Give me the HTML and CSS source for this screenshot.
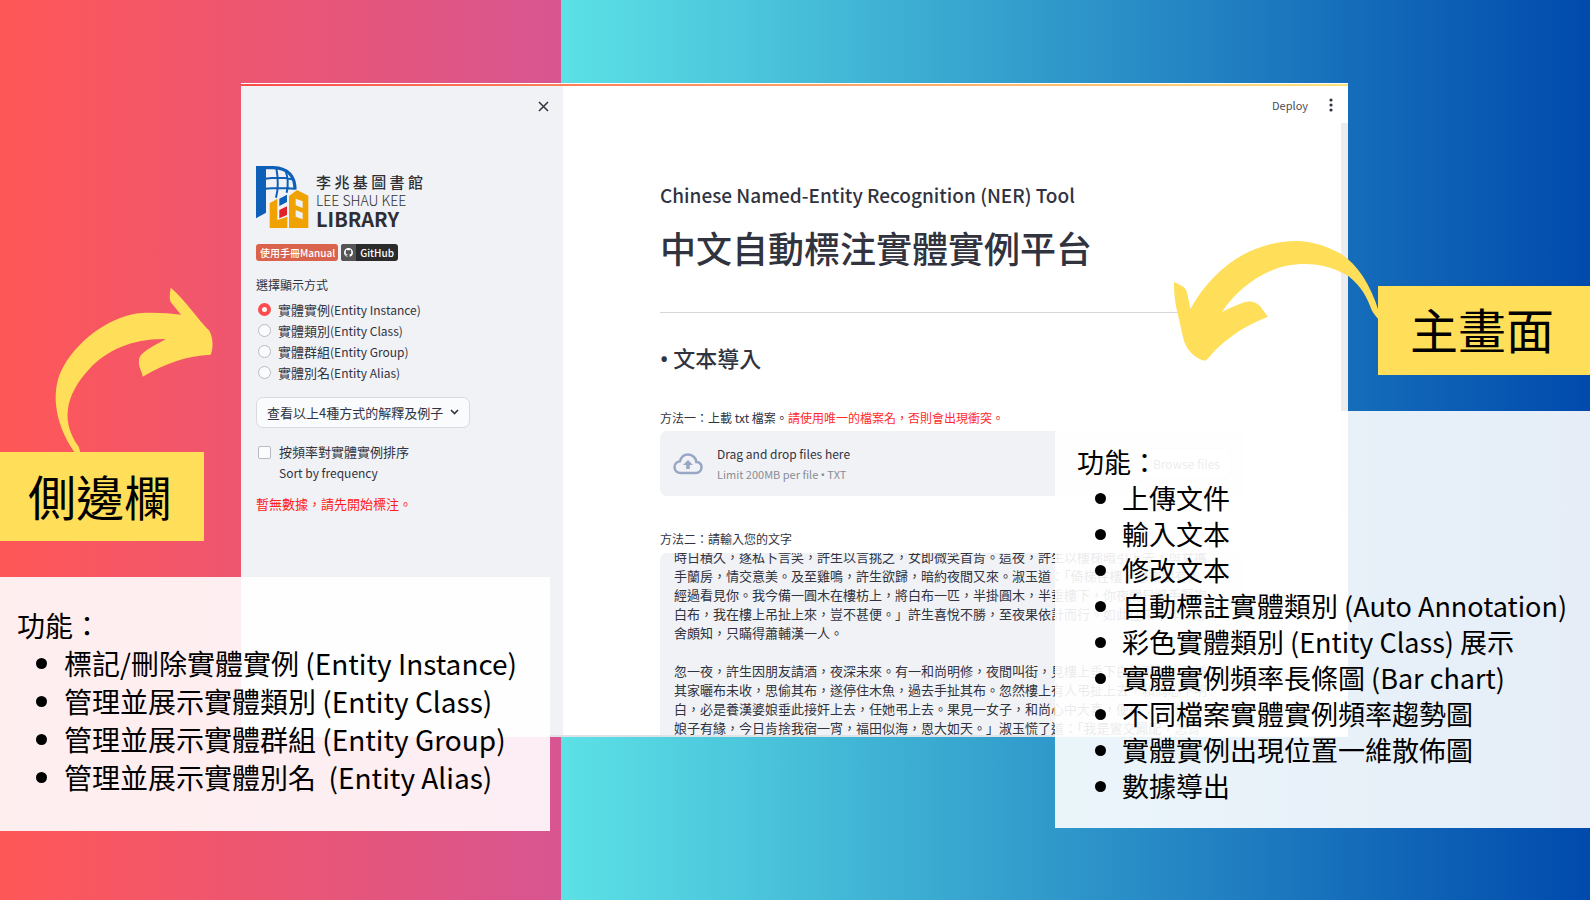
FILE: index.html
```html
<!DOCTYPE html>
<html lang="zh-Hant">
<head>
<meta charset="utf-8">
<title>中文自動標注實體實例平台</title>
<link rel="stylesheet" href="styles.css">
</head>
<body>
<div class="stage">
  <section class="app">
    <div class="rainbow"></div>
    <aside class="sidebar">
      <button class="icon-btn close" type="button" aria-label="Close">
        <svg width="11" height="11" viewBox="0 0 11 11"><path d="M1 1L10 10M10 1L1 10" stroke="#31333f" stroke-width="1.500"/></svg>
      </button>
      <div class="logo">
        <svg width="53" height="62" viewBox="0 0 159 186">
          <path fill="#0d5fb8" d="M0 0H30V140L0 157Z"/>
          <path fill="none" stroke="#0d5fb8" stroke-width="10" d="M20 5H52C98 6 117 34 117 70"/>
          <path fill="none" stroke="#0d5fb8" stroke-width="6" d="M61 6C67 40 67 70 60 95M88 12C98 40 97 60 92 80M28 38C60 34 90 36 108 40M28 68C60 64 90 66 119 68"/>
          <path fill="#f0a202" d="M41 112L64 98V162L94 152V186H41Z"/>
          <path fill="#0d5fb8" d="M70 98L93 86V108L70 120Z"/>
          <path fill="#e02128" d="M70 132L93 121V147L70 157Z"/>
          <path fill="#f0a202" fill-rule="evenodd" d="M99 90L123 72L157 89V186H99ZM119 98V118L140 126V106ZM119 132V152L140 160V140Z"/>
        </svg>
        <div class="logo-text">
          <span class="logo-zh">李 兆 基 圖 書 館</span>
          <span class="logo-name">LEE SHAU KEE</span>
          <span class="logo-lib">LIBRARY</span>
        </div>
      </div>
      <div class="badges">
        <a class="badge manual" href="#">使用手冊Manual</a>
        <a class="badge github" href="#"><span class="mark"><svg width="9" height="9" viewBox="0 0 16 16"><path fill="#fff" d="M8 0C3.58 0 0 3.58 0 8c0 3.54 2.29 6.53 5.47 7.59.4.07.55-.17.55-.38 0-.19-.01-.82-.01-1.49-2.01.37-2.53-.49-2.69-.94-.09-.23-.48-.94-.82-1.13-.28-.15-.68-.52-.01-.53.63-.01 1.08.58 1.23.82.72 1.21 1.87.87 2.33.66.07-.52.28-.87.51-1.07-1.78-.2-3.64-.89-3.64-3.95 0-.87.31-1.59.82-2.15-.08-.2-.36-1.02.08-2.12 0 0 .67-.21 2.2.82a7.6 7.6 0 0 1 4 0c1.53-1.04 2.2-.82 2.2-.82.44 1.1.16 1.92.08 2.12.51.56.82 1.27.82 2.15 0 3.07-1.87 3.75-3.65 3.95.29.25.54.73.54 1.48 0 1.07-.01 1.93-.01 2.2 0 .21.15.46.55.38A8 8 0 0 0 16 8c0-4.42-3.58-8-8-8z"/></svg></span><span class="word">GitHub</span></a>
      </div>
      <fieldset class="modes">
        <legend>選擇顯示方式</legend>
        <label><input type="radio" name="mode" checked><span>實體實例<span class="en">(Entity Instance)</span></span></label>
        <label><input type="radio" name="mode"><span>實體類別<span class="en">(Entity Class)</span></span></label>
        <label><input type="radio" name="mode"><span>實體群組<span class="en">(Entity Group)</span></span></label>
        <label><input type="radio" name="mode"><span>實體別名<span class="en">(Entity Alias)</span></span></label>
      </fieldset>
      <button class="popover" type="button">查看以上4種方式的解釋及例子
        <svg width="9" height="6" viewBox="0 0 9 6"><path d="M1 1L4.500 4.500L8 1" fill="none" stroke="#31333f" stroke-width="1.600"/></svg>
      </button>
      <label class="sort"><input type="checkbox"><span>按頻率對實體實例排序<br><span class="en">Sort by frequency</span></span></label>
      <p class="warn">暫無數據，請先開始標注。</p>
    </aside>
    <main class="main">
      <header class="toolbar">
        <button class="deploy" type="button">Deploy</button>
        <button class="icon-btn" type="button" aria-label="Menu">
          <svg width="4" height="14" viewBox="0 0 4 14" fill="#31333f"><circle cx="2" cy="2" r="1.600"/><circle cx="2" cy="7" r="1.600"/><circle cx="2" cy="12" r="1.600"/></svg>
        </button>
      </header>
      <div class="scroll">
        <div class="content">
          <h2>Chinese Named-Entity Recognition (NER) Tool</h2>
          <h1>中文自動標注實體實例平台</h1>
          <hr>
          <h3><span class="dot">•</span> 文本導入</h3>
          <p class="field-label">方法一：上載 txt 檔案。<span>請使用唯一的檔案名，否則會出現衝突。</span></p>
          <div class="uploader">
            <svg width="30" height="22" viewBox="0 0 30 22"><path d="M8 20C4 20 1.500 17.500 1.500 14C1.500 11 4 8.500 7 8.200C8 4.500 11 1.500 15 1.500C19.500 1.500 23 5 23.300 9C26.500 9.200 28.500 11.500 28.500 14.500C28.500 17.500 26 20 23 20Z" fill="none" stroke="#97a6c3" stroke-width="2.400"/><path d="M15 7L20 12H16.800V16H13.200V12H10Z" fill="#97a6c3"/></svg>
            <div class="drop"><span>Drag and drop files here</span><small>Limit 200MB per file <span class="dot">•</span> TXT</small></div>
            <button class="browse" type="button">Browse files</button>
          </div>
          <label class="field-label" for="source">方法二：請輸入您的文字</label>
          <textarea id="source" wrap="off">時日積久，逐私卜言笑，許生以言挑之，女即微笑首肯。這夜，許生以樓梯暗引上去，與女攜
手蘭房，情交意美。及至雞鳴，許生欲歸，暗約夜間又來。淑玉道：「倚梯在樓，恐夜間有人
經過看見你。我今備一圓木在樓枋上，將白布一匹，半掛圓木，半垂樓下，你夜間只將手緊抱
白布，我在樓上吊扯上來，豈不甚便。」許生喜悅不勝，至夜果依計而行。如此往來半年，鄰
舍頗知，只瞞得蕭輔漢一人。

忽一夜，許生因朋友請酒，夜深未來。有一和尚明修，夜間叫街，見樓上垂下白布到地，只道
其家曬布未收，思偷其布，遂停住木魚，過去手扯其布。忽然樓上有人弔扯上去，和尚心下明
白，必是養漢婆娘垂此接奸上去，任她弔上去。果見一女子，和尚心中大喜，便道：「小僧與
娘子有緣，今日肯捨我宿一宵，福田似海，恩大如天。」淑玉慌了道：「我是鸞交鳳配，怎肯
失身於你？」</textarea>
        </div>
        <div class="scrollbar"></div>
      </div>
    </main>
  </section>

  <svg class="arrow arrow-left" width="240" height="280" viewBox="0 0 720 840"><path fill="#ffde59" d="M226 550C155 450 155 350 190 290C245 195 345 135 425 129C470 127 510 130 543 134L515 100C507 90 509 75 512 53C555 88 595 150 628 182C640 205 640 235 632 254C560 258 500 278 428 320C426 300 415 298 417 270C420 245 460 230 497 207C400 205 320 240 270 295C190 380 185 460 236 530L242 550Z"/></svg>
  <h2 class="tag tag-left">側邊欄</h2>
  <section class="note note-left">
    <p>功能：</p>
    <ul>
      <li>標記/刪除實體實例 (Entity Instance)</li>
      <li>管理並展示實體類別 (Entity Class)</li>
      <li>管理並展示實體群組 (Entity Group)</li>
      <li>管理並展示實體別名&nbsp; (Entity Alias)</li>
    </ul>
  </section>

  <svg class="arrow arrow-right" width="240" height="160" viewBox="0 0 720 480"><path fill="#ffde59" d="M717 276C690 190 650 130 600 100C545 70 500 63 465 63C340 65 225 135 151 267C146 240 143 220 137 208C130 197 115 193 102 186C101 235 110 270 118 300C124 330 128 350 134 368C145 395 170 418 196 422C205 418 215 400 235 382C280 340 330 310 384 290C375 280 370 270 360 258C345 243 325 240 305 250C285 257 262 268 246 276C290 210 360 155 440 137C510 125 570 135 625 168C665 200 680 230 695 270C700 280 707 288 717 300Z"/></svg>
  <h2 class="tag tag-right">主畫面</h2>
  <section class="note note-right">
    <p>功能：</p>
    <ul>
      <li>上傳文件</li>
      <li>輸入文本</li>
      <li>修改文本</li>
      <li>自動標註實體類別 (Auto Annotation)</li>
      <li>彩色實體類別 (Entity Class) 展示</li>
      <li>實體實例頻率長條圖 (Bar chart)</li>
      <li>不同檔案實體實例頻率趨勢圖</li>
      <li>實體實例出現位置一維散佈圖</li>
      <li>數據導出</li>
    </ul>
  </section>
</div>
<script src="app.js"></script>
</body>
</html>
```
FILE: styles.css
```css
* { box-sizing: border-box; }

body, h1, h2, h3, p, ul, hr, fieldset, legend { margin: 0; padding: 0; }

body, button, textarea { font-family: "Noto Sans CJK TC", "Noto Sans", sans-serif; }

button { cursor: pointer; }

.stage {
  position: relative;
  min-height: 100vh;
  padding: 83px 242px 163px 241px;
  overflow: hidden;
  display: flex;
  background:
    linear-gradient(90deg, #ff5757, #d75591) 0 0 / 561px 100% no-repeat,
    linear-gradient(90deg, #5ce1e6 561px, #004aad);
}

/* application window */
.app {
  position: relative;
  flex: 1;
  display: flex;
  height: 654px;
  overflow: hidden;
  background: #fff;
  border-bottom: 2px solid #dfe3e8;
  color: #31333f;
}

.rainbow {
  position: absolute;
  top: 0;
  left: 0;
  right: 0;
  height: 3px;
  border-top: 1px solid #fff;
  background: linear-gradient(90deg, #ff4b4b, #ff8a5c 35%, #fbe27a);
}

.sidebar {
  width: 322px;
  padding: 18px 16px 0 15px;
  background: #f0f2f6;
  display: flex;
  flex-direction: column;
  align-items: flex-start;
}

.icon-btn {
  border: 0;
  padding: 0;
  background: none;
  display: flex;
}

.close { align-self: flex-end; margin-right: -2px; }

.en { font-size: 12px; }

.dot { font-family: "Noto Sans", sans-serif; }

.logo {
  display: flex;
  gap: 7px;
  margin-top: 54px;
}

.logo-text {
  display: flex;
  flex-direction: column;
  padding-top: 6px;
  color: #2f2f33;
  white-space: nowrap;
}

.logo-zh { font-size: 15px; line-height: 20px; font-weight: 500; }
.logo-name { font-size: 14px; line-height: 16px; font-weight: 300; }
.logo-lib { font-size: 20px; line-height: 22px; font-weight: 700; }

.badges {
  display: flex;
  gap: 3px;
  margin-top: 14px;
}

.badge {
  height: 17px;
  border-radius: 3px;
  overflow: hidden;
  color: #fff;
  font: 500 10px/17px "Noto Sans CJK TC", sans-serif;
  text-decoration: none;
  white-space: nowrap;
}

.manual { padding: 0 3px 0 4px; background: #d9634c; }
.github { display: flex; background: #2b2b2b; }
.github .mark { display: flex; align-items: center; padding: 0 3px; background: #555; }
.github .word { padding: 0 4px; }

.modes {
  border: 0;
  margin-top: 14px;
  display: flex;
  flex-direction: column;
}

.modes legend { font-size: 12px; line-height: 20px; margin-bottom: 4px; }

.modes label {
  display: flex;
  align-items: center;
  gap: 7px;
  font-size: 13px;
  line-height: 21px;
}

.modes input {
  appearance: none;
  width: 13px;
  height: 13px;
  margin: 0 0 0 2px;
  border: 1px solid #b9bbc2;
  border-radius: 50%;
  background: #fafbfc;
}

.modes input:checked { border: 4px solid #ff4b4b; background: #fff; }

.popover {
  display: flex;
  align-items: center;
  gap: 7px;
  height: 31px;
  margin-top: 14px;
  padding: 0 10px 1px;
  border: 1px solid #d8dade;
  border-radius: 7px;
  background: #fafbfd;
  color: #31333f;
  font-size: 13px;
  white-space: nowrap;
}

.sort {
  display: flex;
  gap: 8px;
  margin-top: 13px;
  font-size: 13px;
  line-height: 21px;
}

.sort input {
  appearance: none;
  width: 13px;
  height: 13px;
  margin: 5px 0 0 2px;
  border: 1px solid #b9bbc2;
  border-radius: 2px;
  background: #fafbfc;
}

.warn { margin-top: 10px; font-size: 13px; line-height: 21px; color: #ff2020; }

.main {
  flex: 1;
  min-width: 0;
  display: flex;
  flex-direction: column;
}

.toolbar {
  display: flex;
  justify-content: flex-end;
  align-items: center;
  gap: 21px;
  height: 40px;
  padding: 3px 15px 0 0;
}

.deploy {
  border: 0;
  padding: 0;
  background: none;
  color: #4a4c57;
  font-size: 11px;
}

.scroll {
  flex: 1;
  min-height: 0;
  display: flex;
}

.content {
  flex: 1;
  min-width: 0;
  padding: 56px 97px 0;
}

.scrollbar { width: 7px; height: 388px; background: #ededed; }

.content h2 { font-size: 19px; line-height: 32px; font-weight: 500; }
.content h1 { margin-top: 11px; font-size: 36px; line-height: 50px; font-weight: 500; }
.content hr { margin-top: 40px; border: 0; border-top: 1px solid #d6d7da; }
.content h3 { margin-top: 28px; font-size: 22px; line-height: 33px; font-weight: 500; }

.field-label { display: block; font-size: 12px; line-height: 20px; }
.field-label span { color: #ff2b2b; }

p.field-label { margin-top: 33px; }
label.field-label { margin-top: 33px; }

.uploader {
  display: flex;
  align-items: center;
  gap: 14px;
  height: 65px;
  margin-top: 3px;
  padding: 0 13px;
  border-radius: 7px;
  background: #f0f2f6;
}

.drop { flex: 1; display: flex; flex-direction: column; font-size: 12px; line-height: 21px; }
.drop small { font-size: 11px; color: #8a8c95; }

.browse {
  height: 31px;
  padding: 0 10px;
  border: 1px solid #d8dade;
  border-radius: 7px;
  background: #fff;
  color: #31333f;
  font-size: 12px;
}

textarea {
  display: block;
  width: 100%;
  height: 190px;
  margin-top: 4px;
  padding: 0 14px;
  border: 0;
  border-radius: 7px;
  background: #f0f2f6;
  color: #31333f;
  font-size: 13px;
  line-height: 19px;
  resize: none;
  overflow: hidden;
}

/* annotations over the window */
.arrow, .tag, .note { position: absolute; }

.arrow-left { left: 0; top: 270px; }
.arrow-right { right: 210px; top: 220px; }

.tag {
  padding: 8px 32px 10px 28px;
  background: #ffde59;
  color: #000;
  font-size: 48px;
  line-height: 71px;
  font-weight: 400;
  white-space: nowrap;
}

.tag-left { left: 0; top: 452px; }
.tag-right { right: 0; top: 286px; padding: 7px 36px 11px 32px; }

.note {
  background: rgba(255, 255, 255, 0.9);
  color: #000;
  white-space: nowrap;
}

.note ul { list-style: none; }

.note li { display: flex; align-items: center; }

.note li::before {
  content: "";
  width: 11px;
  height: 11px;
  border-radius: 50%;
  background: #000;
}

.note-left {
  left: 0;
  top: 577px;
  width: 550px;
  padding: 29px 17px 35px;
  font-size: 28px;
  line-height: 38px;
}

.note-left li::before { margin: 0 17px 0 19px; }

.note-right {
  right: 0;
  top: 411px;
  width: 535px;
  padding: 33px 22px 24px;
  font-size: 27px;
  line-height: 36px;
}

.note-right li::before { margin: 0 16px 0 18px; }
```
FILE: app.js
```js
document.getElementById('source').scrollTop = 6;
```
